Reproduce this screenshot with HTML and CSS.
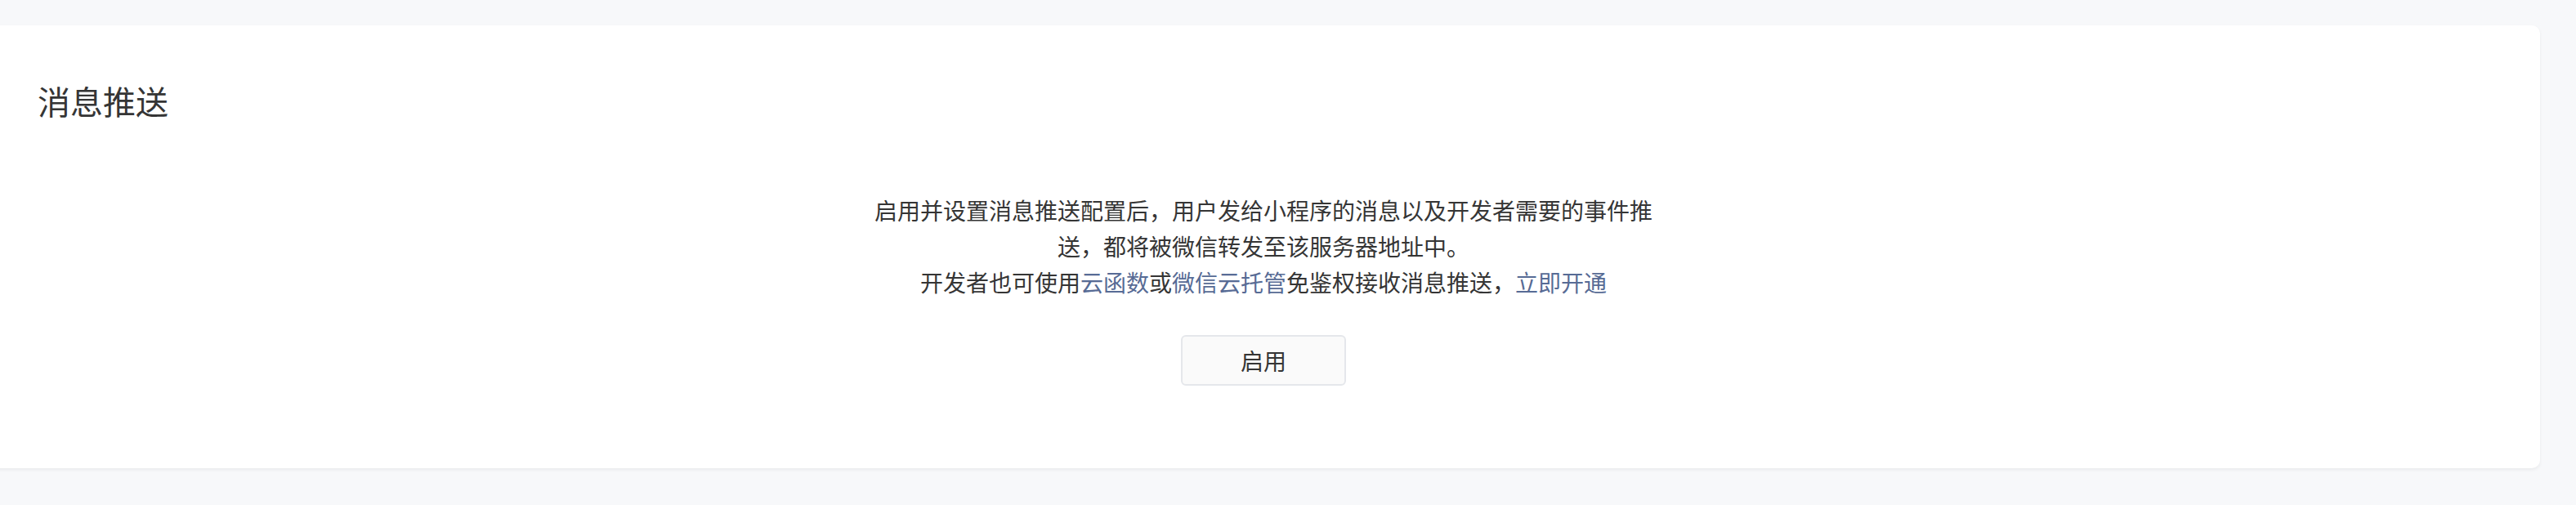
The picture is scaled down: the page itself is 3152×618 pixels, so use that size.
FILE: index.html
```html
<!DOCTYPE html>
<html lang="zh-CN">
<head>
<meta charset="utf-8">
<title>消息推送</title>
<link rel="stylesheet" href="styles.css">
</head>
<body>
<div class="page">
  <section class="card">
    <h2 class="card-title">消息推送</h2>
    <div class="empty">
      <p class="desc">启用并设置消息推送配置后，用户发给小程序的消息以及开发者需要的事件推送，都将被微信转发至该服务器地址中。<br>开发者也可使用<a class="link" href="#">云函数</a>或<a class="link" href="#">微信云托管</a>免鉴权接收消息推送，<a class="link" href="#">立即开通</a></p>
      <button class="btn" type="button">启用</button>
    </div>
  </section>
</div>
</body>
</html>
```

FILE: styles.css
```css
html, body {
  margin: 0;
  padding: 0;
  background: #f7f8fa;
  font-family: "PingFang SC", "Noto Sans CJK SC", "Noto Sans", sans-serif;
  color: #353535;
}

.page {
  padding: 31px 44px 40px 0;
}

.card {
  margin-left: -16px;
  background: #ffffff;
  border-radius: 0 10px 10px 0;
  box-shadow: 0 2px 4px rgba(0, 0, 0, 0.06);
  padding: 64px 0 101px 62px;
  height: 542px;
  box-sizing: border-box;
}

.card-title {
  margin: 0;
  font-size: 40px;
  line-height: 56px;
  font-weight: 400;
  color: #353535;
}

.empty {
  display: flex;
  flex-direction: column;
  align-items: center;
  padding-top: 84px;
  margin-left: -62px;
}

.desc {
  margin: 0;
  max-width: 956px;
  font-size: 28px;
  line-height: 44px;
  text-align: center;
  color: #353535;
}

.link {
  color: #576b95;
  text-decoration: none;
}

.btn {
  margin-top: 43px;
  width: 202px;
  height: 62px;
  box-sizing: border-box;
  background: #fafafa;
  border: 2px solid #e5e7eb;
  border-radius: 6px;
  font-family: inherit;
  font-size: 28px;
  color: #353535;
  padding: 0;
  cursor: pointer;
}
```
